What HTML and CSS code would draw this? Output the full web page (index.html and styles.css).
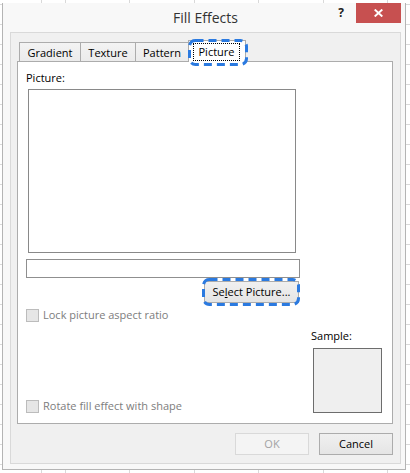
FILE: index.html
```html
<!DOCTYPE html>
<html>
<head>
<meta charset="utf-8">
<title>Fill Effects</title>
<link rel="stylesheet" href="styles.css">
</head>
<body>
<div class="window">
  <div class="titlebar">
    <div></div>
    <div class="title">Fill Effects</div>
    <div class="caption">
      <span class="help">?</span>
      <div class="close">
        <svg width="9" height="8" viewBox="0 0 9 8"><path d="M0.7 0.5 L8.3 7.5 M8.3 0.5 L0.7 7.5" stroke="#fff" stroke-width="1.9" fill="none"/></svg>
      </div>
    </div>
  </div>
  <div class="client">
    <div class="tabs">
      <div class="tab tab-gradient">Gradient</div>
      <div class="tab tab-texture">Texture</div>
      <div class="tab tab-pattern">Pattern</div>
      <div class="tab tab-active">
        <span class="focus-dots">Picture</span>
        <svg class="ring ring-tab" width="60" height="27" viewBox="0 0 60 27"><rect x="1.5" y="1.5" width="57" height="24" rx="6" ry="6"/></svg>
      </div>
    </div>
    <div class="panel">
      <div class="label label-picture">Picture:</div>
      <div class="picture-box"></div>
      <div class="path-field"></div>
      <div class="select-row">
        <div class="btn-wrap">
          <div class="btn btn-select">Se<u>l</u>ect Picture...</div>
          <svg class="ring ring-btn" width="98" height="28" viewBox="0 0 98 28"><rect x="1.5" y="1.5" width="95" height="25" rx="6" ry="6"/></svg>
        </div>
      </div>
      <div class="bottom">
        <div class="checks">
          <div class="check"><span class="box"></span><span>Lock picture aspect ratio</span></div>
          <div class="check"><span class="box"></span><span>Rotate fill effect with shape</span></div>
        </div>
        <div class="sample">
          <div class="label">Sample:</div>
          <div class="sample-box"></div>
        </div>
      </div>
    </div>
    <div class="actions">
      <div class="btn btn-disabled">OK</div>
      <div class="btn">Cancel</div>
    </div>
  </div>
</div>
</body>
</html>
```

FILE: styles.css
```css
* { box-sizing: border-box; }

html, body {
  margin: 0;
  padding: 0;
}

body {
  width: 410px;
  height: 473px;
  overflow: hidden;
  background-color: #ffffff;
  background-image:
    repeating-linear-gradient(to right, #d9d9d9 0, #d9d9d9 1px, transparent 1px, transparent 64.4px),
    repeating-linear-gradient(to bottom, transparent 0, transparent 4px, #d9d9d9 4px, #d9d9d9 5px, transparent 5px, transparent 20px);
  background-position: 65px 0, 0 0;
  font-family: "Segoe UI", "Open Sans", "Noto Sans", sans-serif;
  font-size: 11px;
  color: #000;
  padding-top: 3px;
}

.window {
  margin-left: 2px;
  width: 404px;
  height: 467px;
  background: #f8f8f8;
  border: 1px solid #b4b4b4;
  border-top: none;
  padding: 0 4px 5px 7px;
  display: flex;
  flex-direction: column;
}

/* title bar */
.titlebar {
  height: 29px;
  display: grid;
  grid-template-columns: 1fr auto 1fr;
  align-items: start;
}

.title {
  margin-top: 5px;
  font-size: 14px;
  line-height: 20px;
  color: #333333;
}

.caption {
  display: flex;
  justify-content: flex-end;
  align-items: flex-start;
}

.help {
  font-weight: 700;
  font-size: 12px;
  line-height: 16px;
  margin-top: 2px;
  margin-right: 12px;
  color: #222;
}

.close {
  width: 45px;
  height: 20px;
  background: #c75050;
  display: flex;
  align-items: center;
  justify-content: center;
}

.close svg { display: block; }

/* client area */
.client {
  height: 432px;
  background: #f0f0f0;
  border: 1px solid #d9d9d9;
  padding: 7px 7px 0 6px;
  display: flex;
  flex-direction: column;
}

.tabs {
  display: flex;
  align-items: flex-end;
  padding-left: 2px;
  height: 21px;
  position: relative;
  z-index: 1;
}

.tab {
  height: 19px;
  border: 1px solid #acacac;
  border-bottom: none;
  background: linear-gradient(#f3f3f3, #ebebeb);
  line-height: 17px;
  padding-top: 1px;
  text-align: center;
  margin-right: -1px;
  color: #000;
}

.tab-gradient { width: 62px; }
.tab-texture { width: 56px; }
.tab-pattern { width: 54px; }

.tab-active {
  position: relative;
  width: 58px;
  height: 22px;
  margin-bottom: -1px;
  background: #ffffff;
  padding: 2px 0 0 4px;
  text-align: left;
}

.focus-dots {
  display: inline-block;
  width: 47px;
  height: 18px;
  border: 1px dotted #000;
  line-height: 16px;
  text-align: center;
  vertical-align: top;
}

.ring {
  position: absolute;
  overflow: visible;
  pointer-events: none;
}

.ring rect {
  fill: none;
  stroke: #2b7ae0;
  stroke-width: 3;
  stroke-dasharray: 8 5;
}

.ring-tab {
  left: -1px;
  top: -2px;
}

/* tab page */
.panel {
  height: 363px;
  background: #ffffff;
  border: 1px solid #acacac;
  padding: 8px 0 0 8px;
  display: flex;
  flex-direction: column;
}

.label {
  line-height: 16px;
  color: #000;
}

.picture-box {
  margin-top: 3px;
  margin-left: 2px;
  width: 268px;
  height: 164px;
  border: 1px solid #898989;
}

.path-field {
  margin-top: 6px;
  width: 274px;
  height: 19px;
  border: 1px solid #8f8f8f;
  background: #fff;
}

.select-row {
  width: 274px;
  padding-right: 1px;
  margin-top: 3px;
  display: flex;
  justify-content: flex-end;
}

.btn-wrap {
  position: relative;
}

.btn {
  height: 22px;
  border: 1px solid #acacac;
  background: linear-gradient(#f0f0f0, #e5e5e5);
  line-height: 20px;
  text-align: center;
  color: #000;
}

.btn-select { width: 95px; }

.btn u { text-decoration: underline; text-underline-offset: 1px; }

.ring-btn {
  left: -2px;
  top: -3px;
}

.bottom {
  flex: 1;
  display: flex;
}

.checks {
  flex: 1;
  display: flex;
  flex-direction: column;
  justify-content: space-between;
  padding-top: 4px;
  padding-bottom: 9px;
}

.check {
  display: flex;
  align-items: center;
  line-height: 16px;
  color: #7d7d7d;
}

.check .box {
  width: 13px;
  height: 13px;
  border: 1px solid #bcbcbc;
  background: #e6e6e6;
  margin-right: 4px;
}

.sample {
  display: flex;
  flex-direction: column;
  justify-content: flex-end;
  padding-bottom: 10px;
  margin-right: 10px;
}

.sample .label { margin-bottom: 4px; }

.sample-box {
  margin-left: 2px;
  width: 69px;
  height: 65px;
  border: 1px solid #6d6d6d;
  background: #efefef;
}

/* dialog buttons */
.actions {
  margin-top: 9px;
  display: flex;
  justify-content: flex-end;
  gap: 10px;
}

.actions .btn { width: 74px; }

.btn-disabled {
  border-color: #d9d9d9;
  background: #f4f4f4;
  color: #a3a3a3;
}
```
